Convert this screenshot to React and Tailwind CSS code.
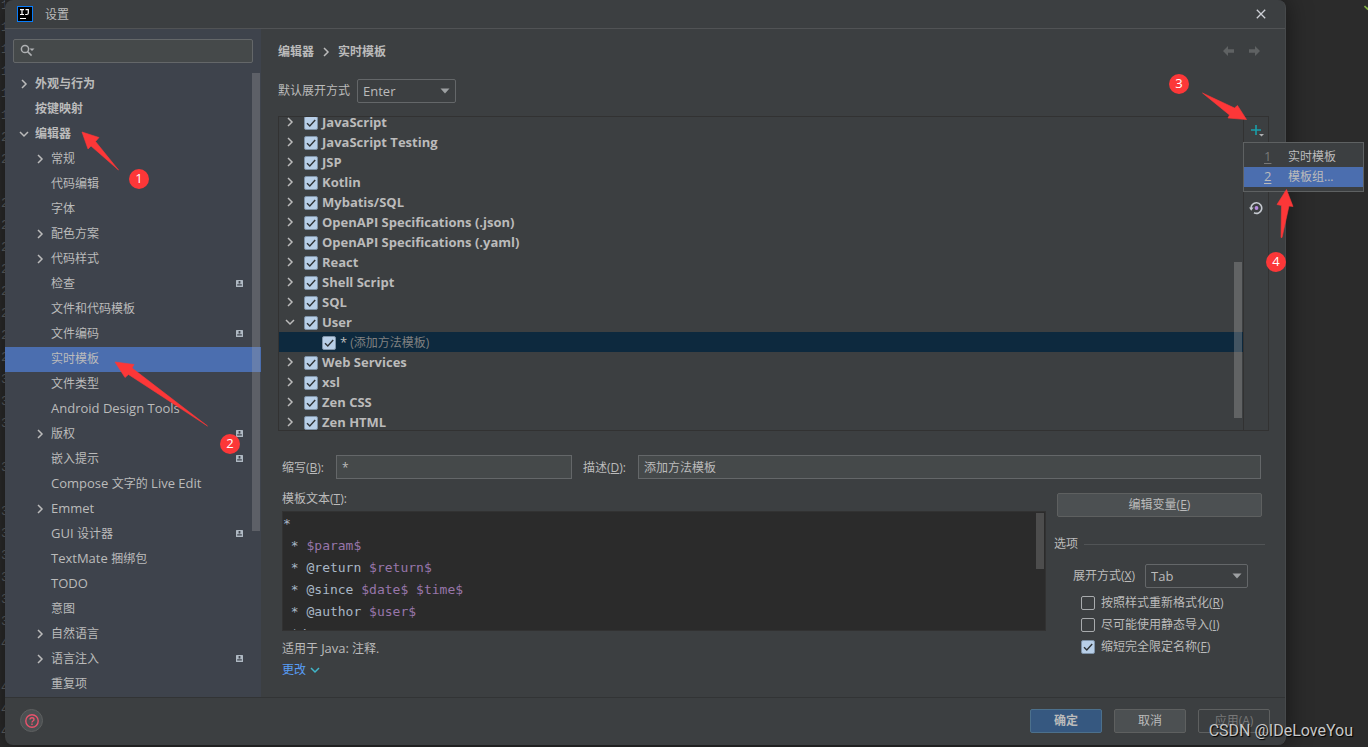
import React, { useState } from 'react';

const settingsTree = [
  { label: '外观与行为', level: 0, arrow: 'right' },
  { label: '按键映射', level: 0 },
  { label: '编辑器', level: 0, arrow: 'down' },
  { label: '常规', level: 1, arrow: 'right' },
  { label: '代码编辑', level: 1 },
  { label: '字体', level: 1 },
  { label: '配色方案', level: 1, arrow: 'right' },
  { label: '代码样式', level: 1, arrow: 'right' },
  { label: '检查', level: 1, badge: true },
  { label: '文件和代码模板', level: 1 },
  { label: '文件编码', level: 1, badge: true },
  { label: '实时模板', level: 1, selected: true },
  { label: '文件类型', level: 1 },
  { label: 'Android Design Tools', level: 1 },
  { label: '版权', level: 1, arrow: 'right', badge: true },
  { label: '嵌入提示', level: 1, badge: true },
  { label: 'Compose 文字的 Live Edit', level: 1 },
  { label: 'Emmet', level: 1, arrow: 'right' },
  { label: 'GUI 设计器', level: 1, badge: true },
  { label: 'TextMate 捆绑包', level: 1 },
  { label: 'TODO', level: 1 },
  { label: '意图', level: 1 },
  { label: '自然语言', level: 1, arrow: 'right' },
  { label: '语言注入', level: 1, arrow: 'right', badge: true },
  { label: '重复项', level: 1 },
];

const templateGroups = [
  { name: 'JavaScript' },
  { name: 'JavaScript Testing' },
  { name: 'JSP' },
  { name: 'Kotlin' },
  { name: 'Mybatis/SQL' },
  { name: 'OpenAPI Specifications (.json)' },
  { name: 'OpenAPI Specifications (.yaml)' },
  { name: 'React' },
  { name: 'Shell Script' },
  { name: 'SQL' },
  { name: 'User', open: true },
  { name: '*', description: '(添加方法模板)', child: true },
  { name: 'Web Services' },
  { name: 'xsl' },
  { name: 'Zen CSS' },
  { name: 'Zen HTML' },
];

// first digit of each visible editor line number, blank where a line is folded
const gutterDigits = '11111122 22222222333 3 3333334 444'.split('');

// latin text is set one pixel larger than the chinese text beside it
const Label = ({ text }) =>
  text.split(/([\u4e00-\u9fff]+)/).map((part, i) =>
    i % 2 ? <span key={i} className="text-[12px]">{part}</span> : part
  );

const Chevron = ({ dir, className = '' }) => (
  <svg viewBox="0 0 10 10" className={`h-[10px] w-[10px] shrink-0 ${className}`} fill="none" stroke="currentColor" strokeWidth="1.5">
    <path d={dir === 'down' ? 'M1 3l4 4 4-4' : 'M3 1l4 4-4 4'} />
  </svg>
);

const SharedBadge = () => (
  <svg viewBox="0 0 7 7" className="ml-auto h-[7px] w-[7px] shrink-0">
    <rect width="7" height="7" rx="0.5" fill="#afb9c3" />
    <path d="M2.6 1h1.8v2.4H2.6zM1.2 4.2h4.6v1.4H1.2z" fill="#3e434c" />
  </svg>
);

const Checkbox = ({ id, label, defaultChecked }) => (
  <span className="relative flex h-[14px] w-[14px] shrink-0">
    <input
      id={id}
      type="checkbox"
      aria-label={label}
      defaultChecked={defaultChecked}
      className="peer h-[14px] w-[14px] appearance-none rounded-[2px] border border-[#a8abad] checked:border-[#7f93a8] checked:bg-[#b8cfe8]"
    />
    <svg viewBox="0 0 14 14" className="pointer-events-none absolute inset-0 hidden peer-checked:block" fill="none" stroke="#2f3438" strokeWidth="1.4">
      <path d="M3 7.2l2.8 2.8L11.2 4" />
    </svg>
  </span>
);

const Select = ({ id, options, className }) => (
  <span className={`relative flex h-6 ${className}`}>
    <select id={id} className="w-full appearance-none rounded-[2px] border border-[#646769] bg-[#3c3f41] pl-[5px] text-[13px] leading-[22px] text-[#bbbbbb]">
      {options.map((o) => <option key={o}>{o}</option>)}
    </select>
    <svg viewBox="0 0 10 6" className="pointer-events-none absolute right-[6px] top-[9px] h-[6px] w-[10px]">
      <path d="M0.5 0.5h9L5 5.5z" fill="#9da0a2" />
    </svg>
  </span>
);

const Step = ({ n, className }) => (
  <span className={`pointer-events-none absolute flex h-5 w-5 items-center justify-center rounded-full bg-[#fc3738] text-[13px] text-white ${className}`}>
    {n}
  </span>
);

const Arrow = ({ points, box, className }) => (
  <svg viewBox={box} className={`pointer-events-none absolute overflow-visible ${className}`}>
    <polygon points={points} fill="#fc3738" stroke="#fc3738" strokeWidth="0.6" strokeLinejoin="round" />
  </svg>
);

const Sidebar = () => (
  <aside className="relative w-64 shrink-0 bg-[#3e434c] pt-[10px]">
    <div className="relative mx-2 mb-[9px]">
      <svg viewBox="0 0 16 14" className="pointer-events-none absolute left-[7px] top-[5px] h-[14px] w-[16px]" fill="none" stroke="#afb1b3" strokeWidth="1.5">
        <circle cx="5" cy="5" r="3.6" />
        <path d="M7.6 7.6l4 4" />
        <path d="M9.5 4.5h5L12 7z" fill="#afb1b3" stroke="none" />
      </svg>
      <input aria-label="搜索设置" className="block h-6 w-full rounded-[2px] border border-[#646769] bg-[#45494a] pl-7 text-[12px] text-[#bbbbbb] outline-none" />
    </div>

    <ul>
      {settingsTree.map((item) => (
        <li
          key={item.label}
          className={`flex h-[25px] items-center pb-0.5 pr-[18px] text-[13px] ${item.level ? 'pl-[30px]' : 'pl-[14px] font-bold'} ${item.selected ? 'bg-[#4b6eaf]' : ''}`}
        >
          <span className="flex w-4 shrink-0">
            {item.arrow && <Chevron dir={item.arrow} />}
          </span>
          <span className="whitespace-nowrap"><Label text={item.label} /></span>
          {item.badge && <SharedBadge />}
        </li>
      ))}
    </ul>

    <div className="absolute right-px top-[44px] h-[458px] w-2 bg-[#a6a6a6]/30"></div>

    <Arrow box="82 132 37 38" points="82,132 99,137.5 95.5,141.5 118.5,170 91,146 88,149" className="left-[77px] top-[103px] h-[38px] w-[37px]" />
    <Step n="1" className="left-[124px] top-[140px]" />
    <Arrow box="115 362 93 64" points="115,362 134,364.5 132,368 207.5,426 128.5,374.5 125,377.5" className="left-[110px] top-[333px] h-[64px] w-[93px]" />
    <Step n="2" className="left-[215px] top-[405px]" />
  </aside>
);

const AddMenu = () => (
  <div className="absolute -left-px top-[25px] w-[121px] border border-[#5e6162] bg-[#3c3f41] py-1">
    <button className="flex h-5 w-full items-center pl-5 text-left text-[12px]">
      <span className="w-6 text-[13px] text-[#787878] underline underline-offset-2">1</span>
      <span>实时模板</span>
    </button>
    <button className="flex h-5 w-full items-center bg-[#4b6eaf] pl-5 text-left text-[12px]">
      <span className="w-6 text-[13px] underline underline-offset-2">2</span>
      <span>模板组...</span>
    </button>
  </div>
);

const TemplateList = () => (
  <div className="mr-4 flex h-[315px] border border-[#323232]">
    <div className="relative flex-1 overflow-hidden">
      <ul className="-mt-[5px]">
        {templateGroups.map((group) => (
          <li
            key={group.name}
            className={`flex h-5 items-center pt-0.5 text-[13px] ${group.child ? 'bg-[#0d293e] pl-[43px]' : 'pl-[6px] font-bold'}`}
          >
            {!group.child && <Chevron dir={group.open ? 'down' : 'right'} className="mb-0.5 mr-[9px]" />}
            <Checkbox label={group.name} defaultChecked />
            <span className="ml-1 whitespace-nowrap">{group.name}</span>
            {group.description && <span className="ml-[3px] text-[12px] text-[#808080]">{group.description}</span>}
          </li>
        ))}
      </ul>
      <div className="absolute right-[1px] top-[145px] h-[156px] w-2 bg-[#a6a6a6]/35"></div>
    </div>

    {/* list toolbar */}
    <div className="relative w-[25px] shrink-0 border-l border-[#323232]">
      <button aria-label="添加" className="absolute left-[6px] top-[7px]">
        <svg viewBox="0 0 15 14" className="h-[14px] w-[15px]" fill="none">
          <path d="M6 1v10M1 6h10" stroke="#1a9fa9" strokeWidth="1.6" />
          <path d="M9 10h5l-2.5 2.5z" fill="#afb1b3" />
        </svg>
      </button>
      <AddMenu />
      <button aria-label="还原" className="absolute left-[5px] top-[84px]">
        <svg viewBox="0 0 14 14" className="h-[14px] w-[14px]" fill="none">
          <path d="M2.2 8A5.3 5.3 0 1 1 5 11.8" stroke="#c5c9d0" strokeWidth="1.6" />
          <path d="M0 6.5h4.6L2.3 9.8z" fill="#c5c9d0" />
          <circle cx="7.5" cy="7" r="1.9" fill="#b58ae0" />
        </svg>
      </button>
      <Step n="3" className="-left-[75px] -top-[43px]" />
      <Arrow box="1202 93 45 27" points="1202.5,93 1234.5,108 1237.5,105.5 1246.5,119.5 1228,118 1229.5,115" className="-left-[42px] -top-[24px] h-[27px] w-[45px]" />
      <Arrow box="1277 189 17 49" points="1286.5,189.5 1293,206.5 1289,206 1282,237.5 1281,237.5 1281.5,205.5 1277,204.5" className="left-[33px] top-[72px] h-[49px] w-[17px]" />
      <Step n="4" className="left-[22px] top-[135px]" />
    </div>
  </div>
);

const Var = ({ children }) => <span className="text-[#9876aa]">{children}</span>;

const TemplateText = () => (
  <div className="relative h-[120px] overflow-hidden border border-[#323232] bg-[#2b2b2b]" role="textbox" aria-multiline="true" aria-labelledby="template-text">
    <pre className="pt-px font-['DejaVu_Sans_Mono',monospace] text-[13px] leading-[22px] text-[#a9b7c6]">
      {'*\n * '}<Var>$param$</Var>
      {'\n * @return '}<Var>$return$</Var>
      {'\n * @since '}<Var>$date$</Var>{' '}<Var>$time$</Var>
      {'\n * @author '}<Var>$user$</Var>
      {'\n */'}
    </pre>
    <div className="absolute right-[1px] top-[1px] h-14 w-2 bg-[#4d4d4d]"></div>
  </div>
);

const OptionRow = ({ id, text, hotkey, defaultChecked }) => (
  <div className="flex h-[22px] items-center gap-[6px] pl-[27px]">
    <Checkbox id={id} defaultChecked={defaultChecked} />
    <label htmlFor={id} className="text-[12px]">{text}(<u>{hotkey}</u>)</label>
  </div>
);

const TemplateForm = () => {
  const [abbreviation, setAbbreviation] = useState('*');
  const [description, setDescription] = useState('添加方法模板');

  const inputClass = 'h-6 border border-[#646769] bg-[#45494a] px-[5px] text-[12px] text-[#bbbbbb] outline-none';

  return (
    <div className="pl-1 pt-6 text-[12px]">
      <div className="mr-6 flex items-center">
        <label htmlFor="abbr" className="w-[54px] pt-0.5">缩写(<u>B</u>):</label>
        <input id="abbr" value={abbreviation} onChange={(e) => setAbbreviation(e.target.value)} className={`w-[236px] ${inputClass}`} />
        <label htmlFor="desc" className="ml-[11px] w-[55px] pt-0.5">描述(<u>D</u>):</label>
        <input id="desc" value={description} onChange={(e) => setDescription(e.target.value)} className={`min-w-0 flex-1 ${inputClass}`} />
      </div>

      <div className="flex">
        <div className="min-w-0 flex-1 pt-[11px]">
          <div id="template-text" className="h-[21px] leading-[18px]">模板文本(<u>T</u>):</div>
          <TemplateText />
          <p className="mt-2 leading-[18px]">适用于 <span className="text-[13px]">Java:</span> 注释.</p>
          <button className="mt-[3px] flex items-center gap-1 leading-[18px] text-[#589df6]">
            更改 <Chevron dir="down" className="text-[#40b6c9]" />
          </button>
        </div>

        <div className="ml-2 w-[231px] shrink-0 pt-[14px]">
          <button className="ml-[3px] block h-6 w-[205px] rounded-[2px] border border-[#5e6060] bg-[#4c5052]">
            编辑变量(<u>E</u>)
          </button>
          <div className="mr-5 mt-[18px] flex items-center gap-[6px] leading-[18px]">
            选项 <span className="h-px flex-1 bg-[#515456]"></span>
          </div>
          <div className="mb-1 mt-[11px] flex items-center pl-[19px]">
            <label htmlFor="expand" className="w-[72px]">展开方式(<u>X</u>)</label>
            <Select id="expand" options={['Tab', 'Enter', 'Space']} className="w-[103px]" />
          </div>
          <OptionRow id="reformat" text="按照样式重新格式化" hotkey="R" />
          <OptionRow id="static-import" text="尽可能使用静态导入" hotkey="I" />
          <OptionRow id="shorten-fq" text="缩短完全限定名称" hotkey="F" defaultChecked />
        </div>
      </div>
    </div>
  );
};

const App = () => {
  return (
    <div className="relative flex min-h-screen overflow-hidden bg-[#2b2b2b] pb-0.5 font-['Open_Sans','Noto_Sans_CJK_SC',sans-serif] text-[12px] text-[#bbbbbb]">
      {/* editor behind the dialog */}
      <div aria-hidden="true" className="-mt-[5px] w-[5px] shrink-0 overflow-hidden pl-[1px] font-['Liberation_Mono',monospace] text-[13px] leading-[22px] text-[#606366]">
        {gutterDigits.map((d, i) => <div key={i} className="h-[22px]">{d}</div>)}
      </div>

      <div className="flex min-w-0 flex-1 flex-col rounded-lg border-r border-[#46494b] bg-[#3c3f41] shadow-[0_0_24px_rgba(0,0,0,0.5)]">
        <header className="flex h-[29px] shrink-0 items-center border-b border-[#515355] pl-3 pr-[19px]">
          <svg viewBox="0 0 16 16" className="h-4 w-4">
            <rect x="0.5" y="0.5" width="15" height="15" fill="#000" stroke="#087cfa" />
            <path d="M3 3.6h4M5 3.6v5M3 8.5h4M8.5 3.6h2.8v3.4q0 1.5-1.5 1.5H8.2M3 12.5h6" fill="none" stroke="#fff" strokeWidth="1.2" />
          </svg>
          <h1 className="ml-3 pt-0.5 text-[12px]">设置</h1>
          <button aria-label="关闭" className="ml-auto">
            <svg viewBox="0 0 10 10" className="h-[10px] w-[10px]" stroke="#ced0d6" strokeWidth="1.3">
              <path d="M0.8 0.8l8.4 8.4M9.2 0.8L0.8 9.2" />
            </svg>
          </button>
        </header>

        <div className="flex flex-1">
          <Sidebar />

          <main className="min-w-0 flex-1 pl-[17px] pt-[13px]">
            <div className="flex h-5 items-center font-bold">
              <span>编辑器</span>
              <Chevron dir="right" className="mx-[7px]" />
              <span>实时模板</span>
              <div className="ml-auto mr-[25px] flex gap-[15px] pb-0.5 text-[#5f6263]">
                <button aria-label="后退">
                  <svg viewBox="0 0 11 10" className="h-[10px] w-[11px]" fill="currentColor"><path d="M0 5l5-5v3.2h6v3.6H5V10z" /></svg>
                </button>
                <button aria-label="前进">
                  <svg viewBox="0 0 11 10" className="h-[10px] w-[11px]" fill="currentColor"><path d="M11 5L6 0v3.2H0v3.6h6V10z" /></svg>
                </button>
              </div>
            </div>

            <div className="mb-[13px] mt-[17px] flex items-center">
              <label htmlFor="default-expand" className="w-[79px]">默认展开方式</label>
              <Select id="default-expand" options={['Enter', 'Tab', 'Space']} className="w-[99px]" />
            </div>

            <TemplateList />
            <TemplateForm />
          </main>
        </div>

        <footer className="flex h-12 shrink-0 items-center gap-3 border-t border-[#323435] pb-0.5 pl-[15px] pr-[15px]">
          <button aria-label="帮助" className="mr-auto flex h-[23px] w-[23px] items-center justify-center rounded-full border border-[#5e6060] bg-[#4c5052]">
            <svg viewBox="0 0 14 14" className="h-[14px] w-[14px]" fill="none" stroke="#e8536c" strokeWidth="1.4">
              <circle cx="7" cy="7" r="6.2" />
              <path d="M5 5.6Q5 3.8 7 3.8T9 5.5Q9 6.4 7.9 7Q7 7.5 7 8.6M7 9.6v1.3" />
            </svg>
          </button>
          <button className="h-6 w-[72px] rounded-[2px] border border-[#4c708c] bg-[#365880] font-bold">确定</button>
          <button className="h-6 w-[72px] rounded-[2px] border border-[#5e6060] bg-[#4c5052]">取消</button>
          <button disabled className="h-6 w-[72px] rounded-[2px] border border-[#5e6060] text-[#777777]">应用(A)</button>
        </footer>
      </div>

      <div className="w-[82px] shrink-0"></div>
      <svg viewBox="0 0 8 6" className="absolute -right-1 top-[5px] h-[6px] w-2" fill="none" stroke="#7fae42" strokeWidth="1.6">
        <path d="M0.5 1l3 3 4-4" />
      </svg>
      <span className="absolute bottom-[5px] right-[15px] font-['Roboto',sans-serif] text-[16px] leading-[22px] text-[#c8c8c8] [text-shadow:1px_1px_1px_#000]">CSDN @IDeLoveYou</span>
    </div>
  );
};

export default App;
